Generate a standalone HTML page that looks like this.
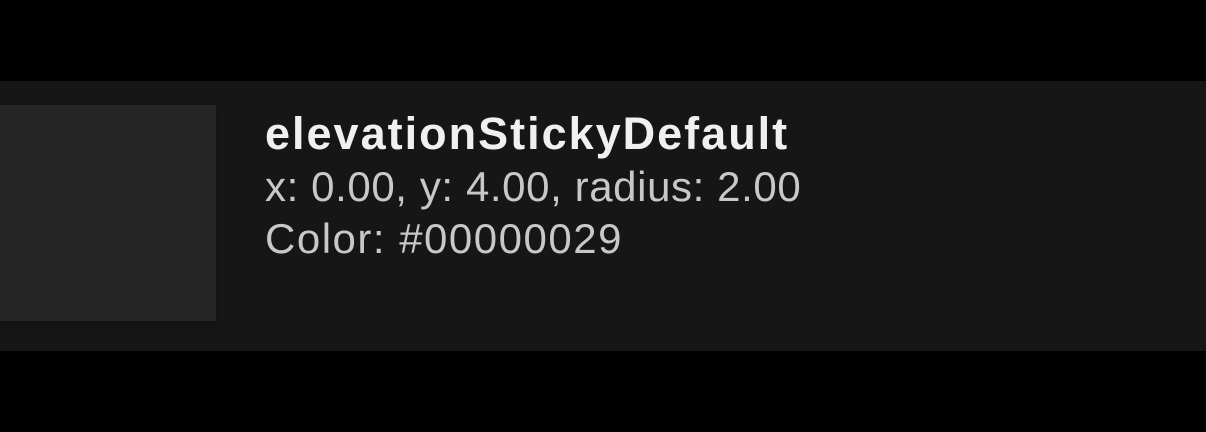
<!DOCTYPE html>
<html><head><style>
html,body{margin:0;padding:0;background:#000;width:1206px;height:432px;overflow:hidden}
.band{position:absolute;left:0;top:81px;width:1206px;height:270px;background:#161616}
.box{position:absolute;left:0;top:105px;width:216px;height:216px;background:#262626;box-shadow:0 4px 4px rgba(0,0,0,0.16)}
.t{position:absolute;left:265px;font-family:"Liberation Sans",sans-serif;white-space:nowrap;line-height:1}
.t1{top:111px;font-size:45px;letter-spacing:2px;font-weight:bold;color:#f0f0f0}
.t2{top:166px;font-size:42px;letter-spacing:0.6px;color:#c8c8c8}
.t3{top:218px;font-size:42px;letter-spacing:1.5px;color:#c8c8c8}
</style></head><body>
<div class="band"></div>
<div class="box"></div>
<div class="t t1">elevationStickyDefault</div>
<div class="t t2">x: 0.00, y: 4.00, radius: 2.00</div>
<div class="t t3">Color: #00000029</div>
</body></html>
